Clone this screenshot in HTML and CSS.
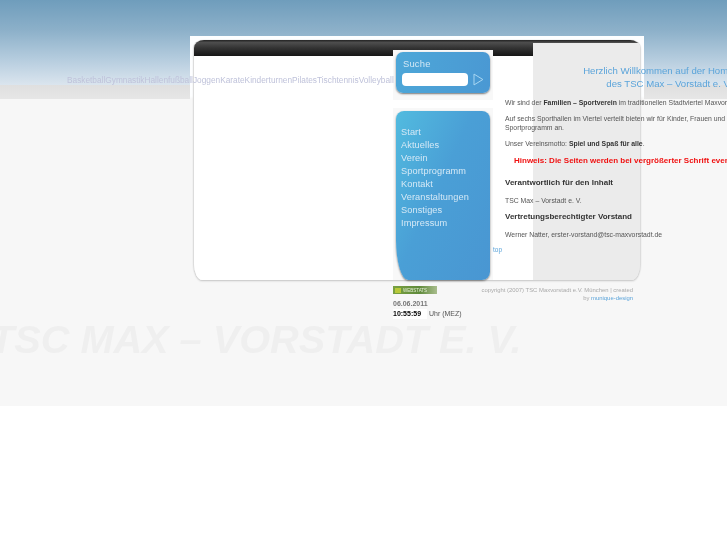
FILE: index.html
```html
<!DOCTYPE html>
<html lang="de">
<head>
  <meta charset="UTF-8">
  <title>TSC Max - Vorstadt e. V.</title>
  <link rel="stylesheet" href="styles.css">
</head>
<body>

  <div class="page">
    <div class="tags">
      <span>Basketball</span><span>Gymnastik</span><span>Hallenfußball</span><span>Joggen</span><span>Karate</span><span>Kinderturnen</span><span>Pilates</span><span>Tischtennis</span><span>Volleyball</span>
    </div>

    <div class="frame">
      <div class="card">
        <div class="left-col"></div>

        <div class="mid-col">
          <div class="search-wrap">
            <div class="search-box">
              <div class="search-title">Suche</div>
              <div class="search-row">
                <div class="search-input"></div>
                <svg class="search-go" width="11" height="13" viewBox="0 0 11 13">
                  <path d="M1 1 L10 6.5 L1 12 Z" fill="none" stroke="#a9d6f2" stroke-width="1"/>
                </svg>
              </div>
            </div>
          </div>
          <div class="menu-wrap">
            <ul class="menu">
              <li>Start</li>
              <li>Aktuelles</li>
              <li>Verein</li>
              <li>Sportprogramm</li>
              <li>Kontakt</li>
              <li>Veranstaltungen</li>
              <li>Sonstiges</li>
              <li>Impressum</li>
            </ul>
          </div>
        </div>

        <div class="text-col">
          <h1>Herzlich Willkommen auf der Homepage<br>des TSC Max – Vorstadt e. V.</h1>
          <p>Wir sind der <b>Familien – Sportverein</b> im traditionellen Stadtviertel Maxvorstadt</p>
          <p>Auf sechs Sporthallen im Viertel verteilt bieten wir für Kinder, Frauen und Männer ein vielfältiges<br>Sportprogramm an.</p>
          <p>Unser Vereinsmotto: <b>Spiel und Spaß für alle</b>.</p>
          <p class="notice">Hinweis: Die Seiten werden bei vergrößerter Schrift eventuell nicht korrekt angezeigt</p>
          <h2 class="first">Verantwortlich für den Inhalt</h2>
          <p>TSC Max – Vorstadt e. V.</p>
          <h2>Vertretungsberechtigter Vorstand</h2>
          <p>Werner Natter, erster-vorstand@tsc-maxvorstadt.de</p>
          <a class="top-link">top</a>
        </div>
      </div>
    </div>

    <div class="footer">
      <div class="foot-left">
        <div class="badge"><i></i>WEBSTATS</div>
        <div class="date">06.06.2011</div>
        <div class="clock-row"><span class="clock">10:55:59</span> Uhr (MEZ)</div>
      </div>
      <div class="foot-right">copyright (2007) TSC Maxvorstadt e.V. München | created<br>by <a>munique-design</a></div>
    </div>

    <div class="watermark">TSC MAX – VORSTADT E. V.</div>
  </div>

</body>
</html>
```

FILE: styles.css
```css
html, body {
  margin: 0;
  padding: 0;
  overflow: hidden;
}
body {
  width: 727px;
  height: 545px;
  background: #fff;
  font-family: 'Liberation Sans', Arial, sans-serif;
}
.page {
  position: relative;
  height: 406px;
  overflow: hidden;
  padding-top: 36px;
  box-sizing: border-box;
  background:
    linear-gradient(#6f9dbc 0, #8cb0c9 30px, #b9cfe0 62px, #dbe5ee 85px, #dfdfdf 85px, #e6e6e6 99px, #f7f7f7 99px) no-repeat;
  background-color: #f7f7f7;
  filter: blur(0.5px);
}
.tags {
  position: absolute;
  top: 74px;
  left: 67px;
  display: flex;
  font-size: 8.3px;
  line-height: 12px;
  color: #bfc2da;
  white-space: nowrap;
}
.frame {
  width: 454px;
  height: 246px;
  margin-left: 190px;
  padding: 4px;
  box-sizing: border-box;
  background: linear-gradient(#fdfeff 0, #fdfeff 60px, #f7f7f7 63px);
}
.card {
  display: flex;
  height: 240px;
  border-radius: 10px 10px 8px 8px / 8px 8px 16px 16px;
  box-shadow: 0 1px 2px #c4c4c4, -1px 0 1px #e2e2e2, 1px 0 1px #e2e2e2;
  background:
    linear-gradient(#222, #555 3px) 0 0 / 100% 3px no-repeat,
    linear-gradient(#5a5a5a, #333 8px, #161616) 0 0 / 339px 16px no-repeat,
    linear-gradient(to right, #fff 339px, #ebebeb 339px);
}
.left-col {
  flex: none;
  width: 199px;
}
.mid-col {
  flex: none;
  width: 100px;
  padding-top: 10px;
  box-sizing: border-box;
  display: flex;
  flex-direction: column;
  gap: 8px;
}
.search-wrap {
  background: #f8f8f8;
  padding: 2px 3px 7px;
}
.search-box {
  height: 41px;
  padding: 6px 6px 0 6px;
  box-sizing: border-box;
  border-radius: 7px;
  background: linear-gradient(100deg, #4da7d8, #4a98d3);
  box-shadow: 0 1px 2px #777;
}
.search-title {
  font-size: 9.4px;
  line-height: 12px;
  padding-left: 1px;
  color: #d3e8f5;
  letter-spacing: 0.2px;
}
.search-row {
  display: flex;
  align-items: center;
  gap: 5px;
  margin-top: 3px;
}
.search-input {
  width: 67px;
  height: 13px;
  border-radius: 4px;
  background: #fff;
}
.menu-wrap {
  flex: 1;
  background: #f8f8f8;
  padding: 3px 3px 0;
}
.menu {
  list-style: none;
  margin: 0;
  height: 169px;
  box-sizing: border-box;
  padding: 15px 0 0 5px;
  border-radius: 8px 8px 8px 12px / 8px 8px 8px 40px;
  background: linear-gradient(115deg, #52bbdf 0, #4a9fd6 45%, #4996d2 100%);
  box-shadow: 0 1px 2px #777;
}
.menu li {
  font-size: 9.2px;
  line-height: 13px;
  color: #d5e9f6;
  letter-spacing: 0.1px;
  white-space: nowrap;
}
.text-col {
  position: relative;
  flex: none;
  width: 340px;
  padding: 24px 0 0 12px;
  box-sizing: border-box;
  font-size: 6.85px;
  line-height: 9px;
  color: #555;
}
.text-col h1 {
  margin: 0 0 8px;
  font-size: 9.6px;
  font-weight: normal;
  line-height: 13px;
  text-align: center;
  color: #5ba4da;
}
.text-col p {
  margin: 0 0 7px;
  white-space: nowrap;
}
.text-col b {
  color: #333;
}
.text-col .notice {
  margin: 8px 0 0 9px;
  font-size: 8px;
  font-weight: bold;
  color: #f01010;
}
.text-col h2 {
  margin: 0 0 9px;
  font-size: 8px;
  line-height: 9px;
  color: #333;
}
.text-col h2.first {
  margin-top: 13px;
}
.top-link {
  position: absolute;
  left: 0;
  top: 205px;
  font-size: 6.5px;
  color: #5ba4da;
}
.footer {
  display: flex;
  margin: 4px 0 0 393px;
  width: 240px;
}
.foot-left {
  width: 78px;
  flex: none;
  font-size: 7px;
  color: #555;
}
.badge {
  display: flex;
  align-items: center;
  gap: 2px;
  width: 44px;
  height: 8px;
  box-sizing: border-box;
  padding-left: 2px;
  background: linear-gradient(to right, #79a142, #5f8a3b 60%, #a9bd8d);
  font-size: 4.5px;
  color: #e6efd8;
  overflow: hidden;
}
.badge i {
  width: 6px;
  height: 5px;
  background: #b8c93a;
}
.date {
  margin-top: 5px;
  font-weight: bold;
  line-height: 10px;
  color: #777;
}
.clock-row {
  line-height: 10px;
  white-space: nowrap;
  font-size: 7px;
}
.clock {
  display: inline-block;
  width: 34px;
  font-weight: bold;
  color: #000;
  background: #fff;
}
.foot-right {
  flex: 1;
  text-align: right;
  font-size: 5.9px;
  line-height: 8px;
  color: #aaa;
  white-space: nowrap;
}
.foot-right a {
  color: #5ba4da;
}
.watermark {
  margin: -2px 0 0 -10px;
  font-size: 39.7px;
  font-weight: bold;
  font-style: italic;
  line-height: 44px;
  color: #efefef;
  white-space: nowrap;
}
```
